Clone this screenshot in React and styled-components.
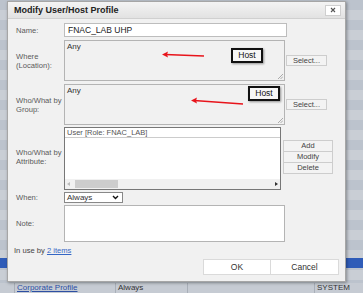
import React from 'react';
import styled, { createGlobalStyle } from 'styled-components';

const GlobalStyle = createGlobalStyle`
  html, body { margin: 0; padding: 0; }
  body {
    width: 363px;
    height: 293px;
    overflow: hidden;
    font-family: "Liberation Sans", Arial, sans-serif;
  }
`;

const Backdrop = styled.div`
  position: relative;
  width: 363px;
  height: 293px;
  overflow: hidden;
  background: repeating-linear-gradient(
    to bottom,
    #bcc3cd 0px,
    #bcc3cd 10px,
    #c9ced5 10px,
    #c9ced5 20px
  );
`;

const SelectedRow = styled.div`
  position: absolute;
  left: 0;
  right: 0;
  top: 258px;
  height: 10px;
  background: #2f5cb8;
`;

const TableRow = styled.div`
  position: absolute;
  left: 0;
  right: 0;
  top: 283px;
  height: 10px;
  display: grid;
  grid-template-columns: 14px 101px 72px 127px 1fr;
  background: #c6cbd3;
  font-size: 8px;
  color: #333;
`;

const Cell = styled.div`
  border-left: 1px solid #a9afb8;
  padding-left: 2px;
  line-height: 10px;
  white-space: nowrap;
  overflow: hidden;
`;

const CellLink = styled(Cell)`
  color: #2d4fa3;
  text-decoration: underline;
`;

const Dialog = styled.div`
  position: absolute;
  left: 7px;
  top: 1px;
  width: 339px;
  height: 281px;
  background: #f1f1f1;
  border: 1px solid #a6a6a6;
  box-shadow: 1px 1px 3px rgba(0, 0, 0, 0.35);
  display: flex;
  flex-direction: column;
  box-sizing: border-box;
`;

const TitleBar = styled.div`
  flex-shrink: 0;
  height: 16px;
  display: flex;
  align-items: center;
  justify-content: space-between;
  padding: 0 4px 0 6px;
  background: linear-gradient(#f4f4f4, #e2e2e2);
  border-bottom: 1px solid #d0d0d0;
`;

const Title = styled.div`
  font-size: 9px;
  font-weight: bold;
  color: #222;
`;

const CloseButton = styled.div`
  width: 14px;
  height: 9px;
  background: #fff;
  border: 1px solid #cfcfcf;
  display: flex;
  align-items: center;
  justify-content: center;
`;

const Body = styled.div`
  flex-shrink: 0;
  display: flex;
  flex-direction: column;
  padding: 4px 0 0 8px;
`;

const Row = styled.div`
  display: flex;
  align-items: ${(p) => p.$align || 'center'};
  margin-bottom: ${(p) => p.$gap ?? 3}px;
`;

const Label = styled.div`
  width: 48px;
  font-size: 7.6px;
  line-height: 9px;
  color: #5a5a5a;
`;

const TextInput = styled.div`
  width: 218px;
  height: 12px;
  background: #fff;
  border: 1px solid #bdbdbd;
  font-size: 8.5px;
  line-height: 12px;
  padding-left: 3px;
  color: #222;
  box-sizing: content-box;
`;

const TextArea = styled.div`
  position: relative;
  width: 221px;
  height: ${(p) => p.$h}px;
  background: ${(p) => p.$bg || '#f1f1f1'};
  border: 1px solid #b4b4b4;
  font-size: 8px;
  line-height: 9px;
  padding: 1px 2px;
  color: #333;
  box-sizing: border-box;
`;

const Grip = styled.svg`
  position: absolute;
  right: 1px;
  bottom: 1px;
`;

const HostTag = styled.div`
  position: absolute;
  left: ${(p) => p.$x}px;
  top: ${(p) => p.$y}px;
  width: 28px;
  height: 11px;
  border: 2px solid #111;
  background: #f6f6f6;
  box-shadow: 1px 1px 2px rgba(0, 0, 0, 0.4);
  font-size: 8.5px;
  line-height: 11px;
  text-align: center;
  color: #111;
`;

const Arrow = styled.svg`
  position: absolute;
  left: ${(p) => p.$x}px;
  top: ${(p) => p.$y}px;
`;

const SideButton = styled.div`
  margin-left: 1px;
  width: 39px;
  height: 9px;
  background: #f3f3f3;
  border: 1px solid #cdcdcd;
  font-size: 7.5px;
  line-height: 9px;
  text-align: center;
  color: #444;
  align-self: center;
`;

const ListBox = styled.div`
  width: 217px;
  height: 63px;
  background: #fff;
  border: 1px solid #777;
  display: flex;
  flex-direction: column;
  box-sizing: border-box;
`;

const ListItem = styled.div`
  font-size: 7.5px;
  line-height: 9px;
  padding-left: 2px;
  color: #555;
  border-bottom: 1px solid #ccc;
`;

const ListSpace = styled.div`
  flex: 1;
`;

const HScroll = styled.div`
  height: 10px;
  background: #f1f1f1;
  display: flex;
  align-items: center;
  padding: 0 2px;
`;

const ScrollThumb = styled.div`
  margin-left: 5px;
  width: 43px;
  height: 8px;
  background: #cdcdcd;
`;

const ScrollFill = styled.div`
  flex: 1;
`;

const ButtonStack = styled.div`
  display: flex;
  flex-direction: column;
  margin: 14px 0 0 2px;
`;

const StackButton = styled.div`
  width: 48px;
  height: 10px;
  background: #f3f3f3;
  border: 1px solid #cdcdcd;
  margin-top: -1px;
  font-size: 7.5px;
  line-height: 10px;
  text-align: center;
  color: #444;
`;

const Dropdown = styled.div`
  width: 52px;
  height: 9px;
  background: #fff;
  border: 1px solid #888;
  display: flex;
  align-items: center;
  justify-content: space-between;
  padding: 0 3px 0 2px;
  font-size: 8px;
  color: #333;
  box-sizing: content-box;
`;

const Footer = styled.div`
  font-size: 7.6px;
  line-height: 9px;
  color: #444;
  margin: 4px 0 0 -2px;
`;

const Link = styled.span`
  color: #3566c4;
  text-decoration: underline;
`;

const Actions = styled.div`
  display: flex;
  justify-content: flex-end;
  padding-right: 6px;
  margin-top: 4px;
`;

const ActionButton = styled.div`
  width: 66px;
  height: 14px;
  background: #fff;
  border: 1px solid #dadada;
  font-size: 8.5px;
  line-height: 14px;
  text-align: center;
  color: #333;
  & + & {
    border-left: none;
    width: 67px;
  }
`;

const ResizeGrip = () => (
  <Grip width="6" height="6" viewBox="0 0 6 6">
    <path d="M6 1 L1 6 M6 3.5 L3.5 6" stroke="#999" strokeWidth="0.8" />
  </Grip>
);

const RedArrow = ({ x, y, w, h, d }) => (
  <Arrow $x={x} $y={y} width={w} height={h} viewBox={`0 0 ${w} ${h}`}>
    <path d={d} stroke="#e8141b" strokeWidth="1.6" fill="none" />
    <path d={`M1 ${h / 2 - 0.5} l6 -3 l-1 3 l1 3 z`} fill="#e8141b" />
  </Arrow>
);

export default function App() {
  return (
    <>
      <GlobalStyle />
      <Backdrop>
        <SelectedRow />
        <TableRow>
          <div />
          <CellLink>Corporate Profile</CellLink>
          <Cell>Always</Cell>
          <Cell />
          <Cell>SYSTEM</Cell>
        </TableRow>
        <Dialog>
          <TitleBar>
            <Title>Modify User/Host Profile</Title>
            <CloseButton>
              <svg width="6" height="6" viewBox="0 0 6 6">
                <path d="M1 1 L5 5 M5 1 L1 5" stroke="#555" strokeWidth="1.1" />
              </svg>
            </CloseButton>
          </TitleBar>
          <Body>
            <Row>
              <Label>Name:</Label>
              <TextInput>FNAC_LAB UHP</TextInput>
            </Row>
            <Row>
              <Label>Where<br />(Location):</Label>
              <TextArea $h={41}>
                Any
                <RedArrow x={96} y={10} w={44} h={8} d="M4 3.5 L43 5" />
                <HostTag $x={166} $y={7}>Host</HostTag>
                <ResizeGrip />
              </TextArea>
              <SideButton>Select...</SideButton>
            </Row>
            <Row $gap={2}>
              <Label>Who/What by<br />Group:</Label>
              <TextArea $h={41}>
                Any
                <RedArrow x={125} y={11} w={54} h={10} d="M4 4.5 L53 8" />
                <HostTag $x={183} $y={1}>Host</HostTag>
                <ResizeGrip />
              </TextArea>
              <SideButton>Select...</SideButton>
            </Row>
            <Row $align="flex-start" $gap={2}>
              <Label style={{ marginTop: 21 }}>Who/What by<br />Attribute:</Label>
              <ListBox>
                <ListItem>User [Role: FNAC_LAB]</ListItem>
                <ListSpace />
                <HScroll>
                  <svg width="3" height="4" viewBox="0 0 3 4">
                    <path d="M3 0 L0 2 L3 4 z" fill="#bbb" />
                  </svg>
                  <ScrollThumb />
                  <ScrollFill />
                  <svg width="3" height="4" viewBox="0 0 3 4">
                    <path d="M0 0 L3 2 L0 4 z" fill="#333" />
                  </svg>
                </HScroll>
              </ListBox>
              <ButtonStack>
                <StackButton>Add</StackButton>
                <StackButton>Modify</StackButton>
                <StackButton>Delete</StackButton>
              </ButtonStack>
            </Row>
            <Row $gap={2}>
              <Label>When:</Label>
              <Dropdown>
                Always
                <svg width="7" height="5" viewBox="0 0 7 5">
                  <path d="M1 1 L3.5 3.5 L6 1" stroke="#111" strokeWidth="1.4" fill="none" />
                </svg>
              </Dropdown>
            </Row>
            <Row $gap={0}>
              <Label>Note:</Label>
              <TextArea $h={37} $bg="#fff" />
            </Row>
            <Footer>
              In use by <Link>2 items</Link>
            </Footer>
            <Actions>
              <ActionButton>OK</ActionButton>
              <ActionButton>Cancel</ActionButton>
            </Actions>
          </Body>
        </Dialog>
      </Backdrop>
    </>
  );
}
